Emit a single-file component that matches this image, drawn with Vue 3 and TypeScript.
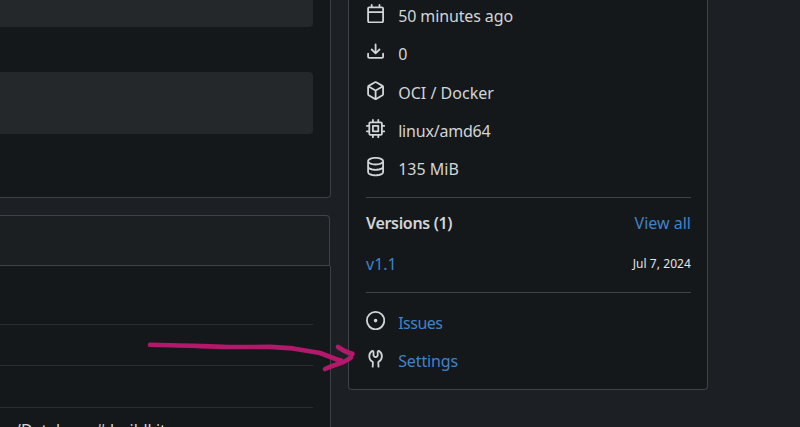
<script setup lang="ts">
interface Detail { icon: string; label: string }

const icons: Record<string, string> = {
  calendar: 'M4.75 0a.75.75 0 0 1 .75.75V2h5V.75a.75.75 0 0 1 1.5 0V2h1.25c.966 0 1.75.784 1.75 1.75v10.5A1.75 1.75 0 0 1 13.25 16H2.75A1.75 1.75 0 0 1 1 14.25V3.75C1 2.784 1.784 2 2.75 2H4V.75A.75.75 0 0 1 4.75 0ZM2.5 7.5v6.75c0 .138.112.25.25.25h10.5a.25.25 0 0 0 .25-.25V7.5Zm10.75-4H2.75a.25.25 0 0 0-.25.25V6h11V3.75a.25.25 0 0 0-.25-.25Z',
  download: 'M2.75 14A1.75 1.75 0 0 1 1 12.25v-2.5a.75.75 0 0 1 1.5 0v2.5c0 .138.112.25.25.25h10.5a.25.25 0 0 0 .25-.25v-2.5a.75.75 0 0 1 1.5 0v2.5A1.75 1.75 0 0 1 13.25 14ZM7.25 7.689V2a.75.75 0 0 1 1.5 0v5.689l1.97-1.969a.749.749 0 1 1 1.06 1.06l-3.25 3.25a.749.749 0 0 1-1.06 0L4.22 6.78a.749.749 0 1 1 1.06-1.06l1.97 1.969Z',
  package: 'm8.878.392 5.25 3.045c.54.314.872.89.872 1.514v6.098a1.75 1.75 0 0 1-.872 1.514l-5.25 3.045a1.75 1.75 0 0 1-1.756 0l-5.25-3.045A1.75 1.75 0 0 1 1 11.049V4.951c0-.624.332-1.201.872-1.514L7.122.392a1.75 1.75 0 0 1 1.756 0ZM7.875 1.69l-4.63 2.685L8 7.133l4.755-2.758-4.63-2.685a.248.248 0 0 0-.25 0ZM2.5 5.677v5.372c0 .09.047.171.125.216l4.625 2.683V8.432Zm6.25 8.271 4.625-2.683a.25.25 0 0 0 .125-.216V5.677L8.75 8.432Z',
  cpu: 'M6.5.75V2h3V.75a.75.75 0 0 1 1.5 0V2h1.25c.966 0 1.75.784 1.75 1.75V5h1.25a.75.75 0 0 1 0 1.5H14v3h1.25a.75.75 0 0 1 0 1.5H14v1.25A1.75 1.75 0 0 1 12.25 14H11v1.25a.75.75 0 0 1-1.5 0V14h-3v1.25a.75.75 0 0 1-1.5 0V14H3.75A1.75 1.75 0 0 1 2 12.25V11H.75a.75.75 0 0 1 0-1.5H2v-3H.75a.75.75 0 0 1 0-1.5H2V3.75C2 2.784 2.784 2 3.75 2H5V.75a.75.75 0 0 1 1.5 0Zm5.75 11.75a.25.25 0 0 0 .25-.25v-8.5a.25.25 0 0 0-.25-.25h-8.5a.25.25 0 0 0-.25.25v8.5c0 .138.112.25.25.25ZM5.75 5h4.5a.75.75 0 0 1 .75.75v4.5a.75.75 0 0 1-.75.75h-4.5a.75.75 0 0 1-.75-.75v-4.5A.75.75 0 0 1 5.75 5Zm.75 4.5h3v-3h-3Z',
  database: 'M1 3.5c0-.626.292-1.165.7-1.59.406-.422.956-.767 1.579-1.041C4.525.32 6.195 0 8 0s3.475.32 4.722.869c.622.274 1.172.62 1.578 1.04.408.426.7.965.7 1.591v9c0 .626-.292 1.165-.7 1.59-.406.422-.956.767-1.579 1.041C11.476 15.68 9.806 16 8 16s-3.475-.32-4.721-.869c-.623-.274-1.173-.62-1.579-1.04-.408-.426-.7-.965-.7-1.591Zm1.5 0c0 .133.058.318.282.551.227.237.591.483 1.101.707C4.898 5.205 6.353 5.5 8 5.5s3.101-.295 4.118-.742c.508-.224.873-.471 1.1-.708.224-.232.282-.417.282-.55s-.058-.318-.282-.551c-.227-.237-.591-.483-1.101-.707C11.102 1.795 9.647 1.5 8 1.5s-3.101.295-4.118.742c-.508.224-.873.471-1.1.708-.224.232-.282.417-.282.55Zm0 4.5c0 .133.058.318.282.551.227.237.591.483 1.101.707C4.898 9.705 6.353 10 8 10s3.101-.295 4.118-.742c.508-.224.873-.471 1.1-.708.224-.232.282-.417.282-.55V5.724c-.241.15-.503.286-.778.407C11.475 6.68 9.805 7 8 7s-3.475-.32-4.721-.869a6.1 6.1 0 0 1-.779-.407Zm0 2.225V12.5c0 .133.058.318.282.55.227.237.592.484 1.1.708 1.016.447 2.471.742 4.118.742s3.102-.295 4.117-.742c.51-.224.874-.47 1.101-.707.224-.233.282-.418.282-.551v-2.275c-.241.15-.503.285-.778.406-1.247.549-2.917.869-4.722.869s-3.475-.32-4.721-.869a6.236 6.236 0 0 1-.779-.406Z',
  issue: 'M8 9.5a1.5 1.5 0 1 0 0-3 1.5 1.5 0 0 0 0 3ZM8 0a8 8 0 1 1 0 16A8 8 0 0 1 8 0ZM1.5 8a6.5 6.5 0 1 0 13 0 6.5 6.5 0 0 0-13 0Z',
  tools: 'M5.433 2.304A4.492 4.492 0 0 0 3.5 6c0 1.598.832 3.002 2.09 3.802.518.328.929.923.902 1.64v.008l-.164 3.337a.75.75 0 1 1-1.498-.073l.163-3.33c.002-.085-.05-.216-.207-.316A5.996 5.996 0 0 1 2 6a5.993 5.993 0 0 1 2.567-4.92 1.482 1.482 0 0 1 1.673-.04c.462.296.76.827.76 1.423v2.82c0 .082.041.16.11.206l.75.51a.25.25 0 0 0 .28 0l.75-.51A.249.249 0 0 0 9 5.282V2.463c0-.596.298-1.127.76-1.423a1.482 1.482 0 0 1 1.673.04A5.993 5.993 0 0 1 14 6a5.996 5.996 0 0 1-2.786 5.068c-.157.1-.209.23-.207.315l.163 3.33a.75.75 0 0 1-1.498.074l-.164-3.345c-.027-.717.384-1.312.902-1.64A4.495 4.495 0 0 0 12.5 6a4.492 4.492 0 0 0-1.933-3.696c-.024.017-.067.067-.067.16v2.818a1.75 1.75 0 0 1-.767 1.448l-.75.51a1.75 1.75 0 0 1-1.966 0l-.75-.51A1.75 1.75 0 0 1 5.5 5.282V2.463c0-.092-.043-.142-.067-.159Z',
}

const details: Detail[] = [
  { icon: 'calendar', label: '50 minutes ago' },
  { icon: 'download', label: '0' },
  { icon: 'package', label: 'OCI / Docker' },
  { icon: 'cpu', label: 'linux/amd64' },
  { icon: 'database', label: '135 MiB' },
]
const links: Detail[] = [
  { icon: 'issue', label: 'Issues' },
  { icon: 'tools', label: 'Settings' },
]
</script>

<template>
  <div class="page">
    <main class="main">
      <section class="install">
        <div class="code first"></div>
        <div class="code second"></div>
      </section>
      <header class="layers-head"></header>
      <section class="layers">
        <div class="layer l1"></div>
        <div class="layer l2"></div>
        <div class="layer l3"></div>
        <div class="command">/Database # buildkit</div>
      </section>
    </main>
    <aside class="side">
      <div class="list details">
        <div v-for="d in details" :key="d.icon" class="row" :class="d.icon">
          <svg class="icon" viewBox="0 0 16 16"><path :d="icons[d.icon]" /></svg>
          <span class="label">{{ d.label }}</span>
        </div>
      </div>
      <div class="versions">
        <div class="pair head"><strong>Versions (1)</strong><a class="all">View all</a></div>
        <div class="pair version"><a class="tag">v1.1</a><time>Jul 7, 2024</time></div>
      </div>
      <div class="list links">
        <div v-for="l in links" :key="l.icon" class="row" :class="l.icon">
          <svg class="icon" viewBox="0 0 16 16"><path :d="icons[l.icon]" /></svg>
          <a class="label">{{ l.label }}</a>
        </div>
      </div>
    </aside>
    <svg class="arrow" viewBox="0 0 220 40">
      <path d="M10 9.8C35 10.2 60 11.2 88 12L130 11.9L153 13.4L180 18L197 24.5L201 25.5" />
      <path d="M198 12Q206 17.5 212.5 18.8M211 22.5Q206 26.5 198 29Q191 31 185 34" />
    </svg>
  </div>
</template>

<style>
body { margin: 0; background: #1c1f24; }
</style>

<style scoped>
.page {
  position: relative;
  box-sizing: border-box;
  display: grid;
  grid-template-columns: 331px 360px;
  column-gap: 17px;
  width: 800px;
  height: 427px;
  overflow: hidden;
  background: #1c1f24;
  color: #d2d5d8;
  font: 16px/24px "Noto Sans", "Open Sans", sans-serif;
}
.main { height: 427px; overflow: hidden; }
.install {
  box-sizing: border-box;
  height: 198px;
  border: solid #3b4046;
  border-width: 0 1px 1px 0;
  border-radius: 0 0 4px 0;
  background: #14181a;
}
.code { width: 313px; background: #24282b; }
.first { height: 27px; border-radius: 0 0 4px 0; }
.second { height: 62px; margin-top: 45px; border-radius: 0 4px 4px 0; }
.layers-head {
  box-sizing: border-box;
  width: 330px;
  height: 51px;
  margin-top: 17px;
  border: 1px solid #3f4347;
  border-left: 0;
  border-radius: 0 4px 0 0;
  background: #1b1f21;
}
.layers {
  box-sizing: border-box;
  height: 161px;
  border-right: 1px solid #3b4046;
  background: #14181a;
  overflow: hidden;
}
.layer { box-sizing: border-box; width: 313px; border-bottom: 1px solid #2a2e31; }
.l1 { height: 59px; }
.l2 { height: 41px; }
.l3 { height: 42px; }
.command { padding: 10px 0 0 15px; white-space: nowrap; letter-spacing: -.05px; }
.side {
  box-sizing: border-box;
  height: 390px;
  padding: 0 16px 0 17px;
  border: 1px solid #3f4348;
  border-top: 0;
  border-radius: 0 0 4px 4px;
  background: #14181a;
}
.list { display: grid; grid-auto-rows: 38.4px; }
.details { height: 197px; box-sizing: border-box; padding-top: 3.8px; }
.row { display: flex; align-items: flex-start; gap: 13px; }
.icon { flex: none; display: block; width: 19.2px; height: 19.2px; fill: #d2d5d8; }
.label { white-space: nowrap; letter-spacing: -.12px; }
.package .label { letter-spacing: .02px; }
.cpu .label { letter-spacing: -.2px; }
.database .label { letter-spacing: 0; }
.issue .label { letter-spacing: -.5px; }
.versions {
  box-sizing: border-box;
  height: 96px;
  border: solid #3f4348;
  border-width: 1px 0;
}
.pair { display: flex; justify-content: space-between; }
.head { padding-top: 13px; }
.version { padding-top: 17px; }
strong { font-weight: 600; letter-spacing: -.33px; }
a { color: #4183c9; }
time { font-size: 12px; letter-spacing: .07px; color: #e2e4e6; }
.links { padding-top: 18px; }
.arrow {
  position: absolute;
  left: 140px;
  top: 335px;
  width: 220px;
  height: 40px;
  fill: none;
  stroke: #b3196a;
  stroke-width: 4.6;
  stroke-linecap: round;
  stroke-linejoin: round;
}
</style>
